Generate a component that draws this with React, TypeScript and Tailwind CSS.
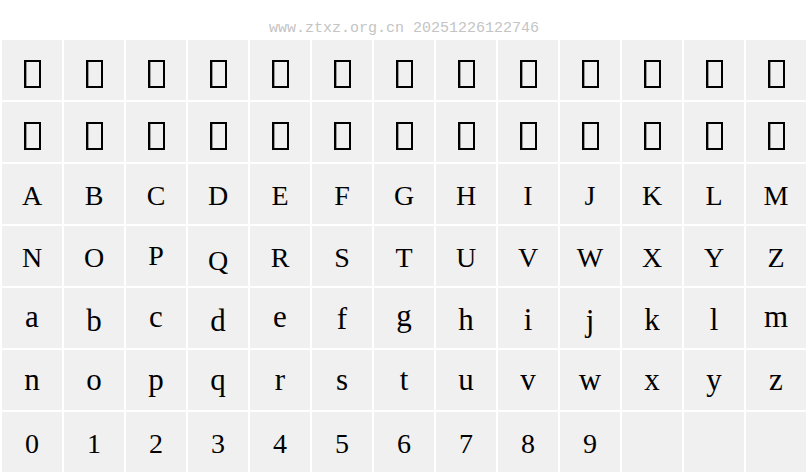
import React from "react";

type Glyph = { c: string; cls: string };

const upperRow1: Glyph[] = "ABCDEFGHIJKLM".split("").map((c) => ({ c, cls: "translate-y-[2px]" }));
const upperRow2: Glyph[] = "NOPQRSTUVWXYZ".split("").map((c) => ({
  c,
  cls: c === "P" ? "translate-y-0" : c === "Q" ? "translate-y-[5px]" : "translate-y-[2px]",
}));

const lowerRow1: Glyph[] = [
  { c: "a", cls: "-translate-y-[1px]" },
  { c: "b", cls: "translate-y-[3px]" },
  { c: "c", cls: "-translate-y-[1px]" },
  { c: "d", cls: "translate-y-[3px]" },
  { c: "e", cls: "-translate-y-[1px]" },
  { c: "f", cls: "translate-y-[1px]" },
  { c: "g", cls: "-translate-y-[2px]" },
  { c: "h", cls: "translate-y-[2px]" },
  { c: "i", cls: "translate-y-[2px]" },
  { c: "j", cls: "translate-y-[3px]" },
  { c: "k", cls: "translate-y-[2px]" },
  { c: "l", cls: "translate-y-[2px]" },
  { c: "m", cls: "-translate-y-[1px]" },
];

const lowerRow2: Glyph[] = "nopqrstuvwxyz".split("").map((c) => ({ c, cls: "translate-y-0" }));

const digits: Glyph[] = "0123456789".split("").map((c) => ({ c, cls: "translate-y-[2px]" }));

function Tofu() {
  return (
    <div className="flex h-[60px] items-start justify-center bg-[#f0f0f0] pt-[20px]">
      <div className="h-[28px] w-[17px] border-2 border-black shadow-[inset_1px_0_0_#9a9a9a]" />
    </div>
  );
}

function Cell({ g, big }: { g?: Glyph; big?: boolean }) {
  return (
    <div
      className={`h-[60px] bg-[#f0f0f0] text-center leading-[60px] text-black ${
        big ? "text-[31px]" : "text-[28px]"
      }`}
    >
      {g && <span className={`inline-block ${g.cls}`}>{g.c}</span>}
    </div>
  );
}

export default function App() {
  const tofus = Array.from({ length: 26 });
  return (
    <div className="h-[476px] w-[808px] overflow-hidden bg-white">
      <div className="h-[40px] pt-[21px] text-center font-['Liberation_Mono',monospace] text-[15px] leading-[15px] text-[#c4c4c4]">
        www.ztxz.org.cn 20251226122746
      </div>
      <div className="grid grid-cols-[repeat(13,60px)] gap-[2px] px-[2px] font-['Liberation_Serif',serif]">
        {tofus.map((_, i) => (
          <Tofu key={"t" + i} />
        ))}
        {upperRow1.map((g) => (
          <Cell key={g.c} g={g} />
        ))}
        {upperRow2.map((g) => (
          <Cell key={g.c} g={g} />
        ))}
        {lowerRow1.map((g) => (
          <Cell key={g.c} g={g} big />
        ))}
        {lowerRow2.map((g) => (
          <Cell key={g.c} g={g} big />
        ))}
        {digits.map((g) => (
          <Cell key={g.c} g={g} />
        ))}
        <Cell />
        <Cell />
        <Cell />
      </div>
    </div>
  );
}
